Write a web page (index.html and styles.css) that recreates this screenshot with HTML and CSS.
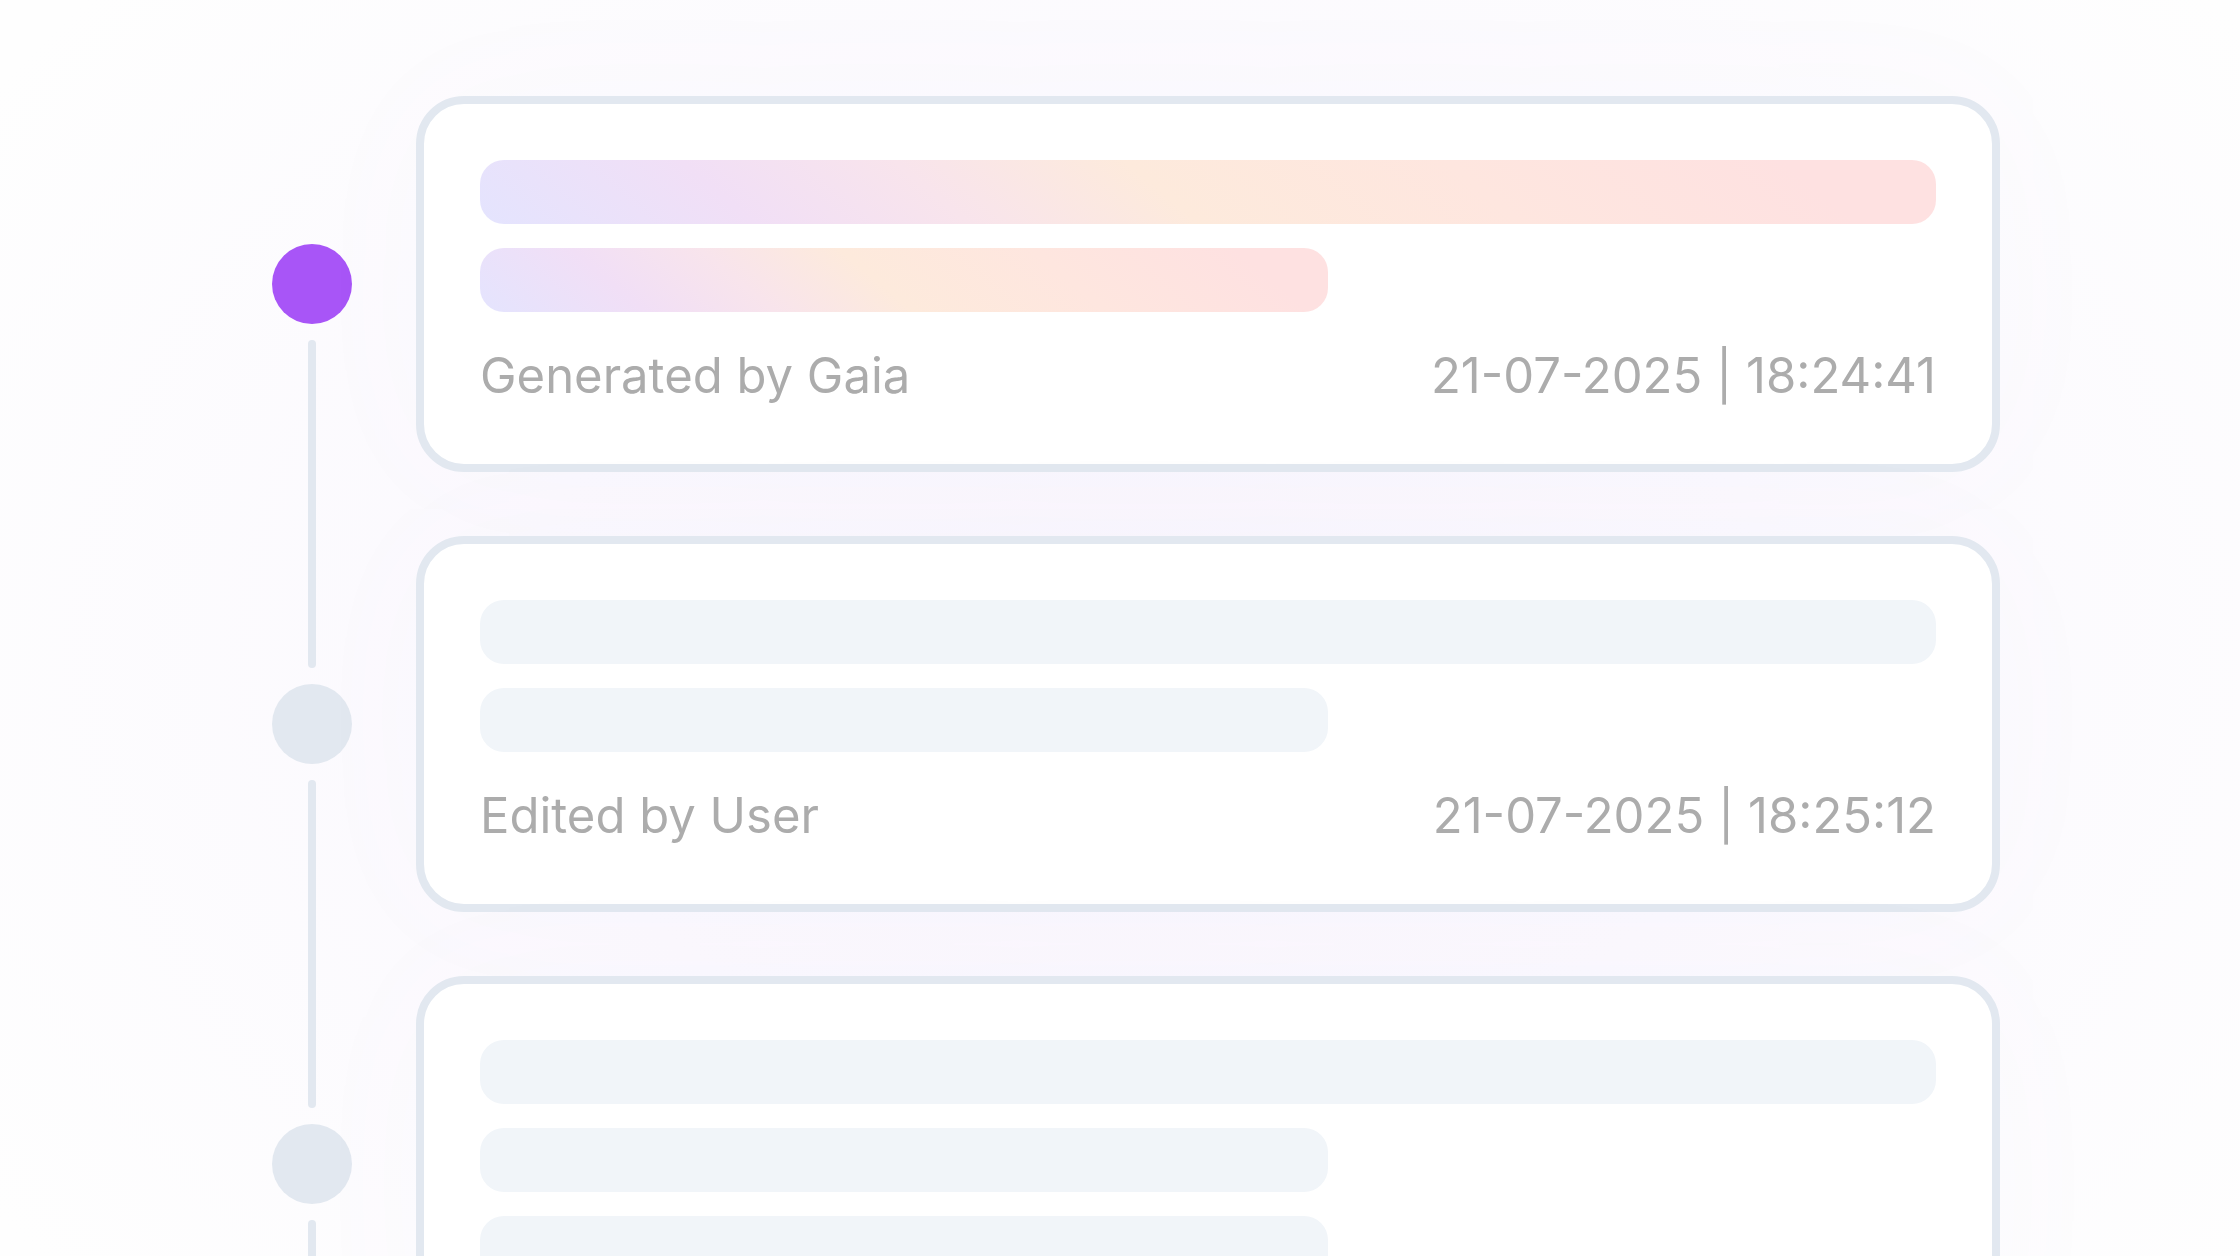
FILE: index.html
```html
<!DOCTYPE html>
<html lang="en">
<head>
<meta charset="utf-8">
<title>Timeline</title>
<link rel="stylesheet" href="styles.css">
</head>
<body>
<main class="timeline">
  <section class="item">
    <div class="rail rail-first">
      <span class="line line-top"></span>
      <span class="dot dot-active"></span>
      <span class="line line-bottom"></span>
    </div>
    <div class="slot">
      <article class="card">
        <div class="bar bar-full bar-ai"></div>
        <div class="bar bar-part bar-ai"></div>
        <footer class="meta">
          <span class="who">Generated by Gaia</span>
          <span class="when">21-07-2025 | 18:24:41</span>
        </footer>
      </article>
    </div>
  </section>
  <section class="item">
    <div class="rail">
      <span class="line line-top"></span>
      <span class="dot"></span>
      <span class="line line-bottom"></span>
    </div>
    <div class="slot">
      <article class="card">
        <div class="bar bar-full"></div>
        <div class="bar bar-part"></div>
        <footer class="meta">
          <span class="who">Edited by User</span>
          <span class="when">21-07-2025 | 18:25:12</span>
        </footer>
      </article>
    </div>
  </section>
  <section class="item">
    <div class="rail">
      <span class="line line-top"></span>
      <span class="dot"></span>
      <span class="line line-bottom"></span>
    </div>
    <div class="slot">
      <article class="card">
        <div class="bar bar-full"></div>
        <div class="bar bar-part"></div>
        <div class="bar bar-part"></div>
        <div class="bar bar-part"></div>
      </article>
    </div>
  </section>
</main>
</body>
</html>
```

FILE: styles.css
```css
html, body {
  margin: 0;
  padding: 0;
}

body {
  width: 2240px;
  height: 1256px;
  overflow: hidden;
  background:
    radial-gradient(ellipse 1400px 1000px at 1150px 650px, #f9f6fd 0%, #fbf9fe 45%, rgba(254,254,255,0) 100%),
    #fefefe;
  font-family: Inter, "Noto Sans", "Liberation Sans", sans-serif;
}

.timeline {
  padding: 64px 0 0 272px;
  display: flex;
  flex-direction: column;
}

.item {
  display: grid;
  grid-template-columns: 80px 1584px;
  column-gap: 64px;
}

.rail {
  display: flex;
  flex-direction: column;
  align-items: center;
}

.line {
  width: 8px;
  background: #e2e8f0;
}

.line-top {
  flex: none;
  height: 164px;
  border-radius: 0 0 4px 4px;
}

.line-bottom {
  flex: 1;
  border-radius: 4px 4px 0 0;
}

.rail-first .line-top {
  visibility: hidden;
}

.dot {
  width: 80px;
  height: 80px;
  border-radius: 50%;
  background: #e2e8f0;
  margin: 16px 0;
  flex: none;
}

.dot-active {
  background: #a855f7;
}

.slot {
  padding: 32px 0;
}

.card {
  border: 8px solid #e2e8f0;
  border-radius: 48px;
  background: #ffffff;
  padding: 56px;
  display: flex;
  flex-direction: column;
  gap: 24px;
  box-shadow: 0 0 160px rgba(150, 110, 230, 0.025);
}

.bar {
  height: 64px;
  border-radius: 24px;
  background: #f1f5f9;
}

.bar-full {
  width: 100%;
}

.bar-part {
  width: 848px;
}

.bar-ai {
  background: linear-gradient(40deg, #e4e4fe 0%, #f1dff6 18%, #f8e4ec 32%, #fdeadc 47%, #fee6df 68%, #fee1e1 90%);
}

.meta {
  margin-top: 8px;
  display: flex;
  justify-content: space-between;
  align-items: baseline;
  font-size: 49px;
  line-height: 64px;
  color: #acacac;
  font-weight: 400;
}
```
